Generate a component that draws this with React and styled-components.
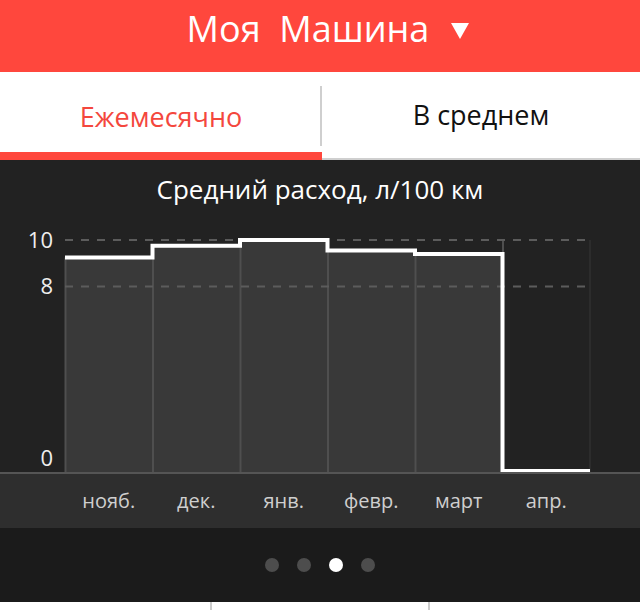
import React from "react";
import styled, { createGlobalStyle } from "styled-components";

const GlobalStyle = createGlobalStyle`
  html, body {
    margin: 0;
    padding: 0;
    background: #1b1b1b;
    font-family: "Open Sans", "Noto Sans", sans-serif;
  }
`;

const months = [
  { label: "нояб.", value: 9.25 },
  { label: "дек.", value: 9.75 },
  { label: "янв.", value: 10 },
  { label: "февр.", value: 9.55 },
  { label: "март", value: 9.4 },
  { label: "апр.", value: 0 },
];

// chart geometry (svg local coords)
const W = 640;
const H = 254;
const LEFT = 65;
const COL = 87.5;
const ZERO = 252;
const UNIT = 23.2;
const yOf = (v) => ZERO - v * UNIT;

const App = () => {
  const [active] = React.useState(0);
  return (
    <Page>
      <GlobalStyle />
      <Header>
        <HeaderTitle>Моя&nbsp; Машина</HeaderTitle>
        <Caret />
      </Header>
      <Tabs>
        <Tab $active={active === 0} $divider>
          Ежемесячно
        </Tab>
        <Tab $active={active === 1}>В среднем</Tab>
      </Tabs>
      <ChartPanel>
        <ChartTitle>Средний расход, л/100 км</ChartTitle>
        <Chart />
        <AxisBand>
          {months.map((m) => (
            <AxisLabel key={m.label}>{m.label}</AxisLabel>
          ))}
        </AxisBand>
      </ChartPanel>
      <Pager>
        {[0, 1, 2, 3].map((i) => (
          <Dot key={i} $on={i === 2} />
        ))}
      </Pager>
      <BottomStrip>
        <StripCell />
        <StripCell $mid />
        <StripCell />
      </BottomStrip>
    </Page>
  );
};

export default App;

const Chart = () => {
  let d = "";
  months.forEach((m, i) => {
    const x0 = LEFT + i * COL;
    const x1 = x0 + COL;
    const y = m.value === 0 ? ZERO - 1 : yOf(m.value);
    d += i === 0 ? `M${x0} ${y}` : ` L${x0} ${y}`;
    d += ` L${x1} ${y}`;
  });
  const right = LEFT + months.length * COL;
  return (
    <ChartSvg width={W} height={H} viewBox={`0 0 ${W} ${H}`}>
      {months.map((m, i) =>
        m.value > 0 ? (
          <rect
            key={m.label}
            x={LEFT + i * COL}
            y={yOf(m.value)}
            width={COL}
            height={ZERO - yOf(m.value)}
            fill="#393939"
          />
        ) : null
      )}
      {months.map((m, i) => (
        <line
          key={"v" + i}
          x1={LEFT + i * COL + 0.5}
          x2={LEFT + i * COL + 0.5}
          y1={m.value > 0 ? yOf(m.value) : yOf(10)}
          y2={ZERO}
          stroke={m.value > 0 || (i > 0 && months[i - 1].value > 0) ? "#4f4f4f" : "#2c2c2c"}
          strokeWidth="2"
        />
      ))}
      <line x1={right} x2={right} y1={yOf(10)} y2={ZERO} stroke="#2c2c2c" strokeWidth="2" />
      {[10, 8].map((v) => (
        <line
          key={"g" + v}
          x1={LEFT}
          x2={right - 5}
          y1={yOf(v)}
          y2={yOf(v)}
          stroke="#5c5c5c"
          strokeWidth="2"
          strokeDasharray="8 8"
        />
      ))}
      <path d={d} fill="none" stroke="#ffffff" strokeWidth="4" strokeLinejoin="miter" />
      <line x1="0" x2={W} y1={ZERO + 1} y2={ZERO + 1} stroke="#555" strokeWidth="2" />
      {[10, 8, 0].map((v) => (
        <text
          key={"t" + v}
          x="53"
          y={v === 0 ? ZERO - 6 : yOf(v) + 8}
          textAnchor="end"
          fill="#eeeeee"
          fontSize="22"
          fontFamily="'Open Sans', 'Noto Sans', sans-serif"
        >
          {v}
        </text>
      ))}
    </ChartSvg>
  );
};

const Page = styled.div`
  width: 640px;
  height: 610px;
  overflow: hidden;
  display: flex;
  flex-direction: column;
`;

const Header = styled.div`
  height: 72px;
  background: #ff473d;
  display: flex;
  align-items: center;
  justify-content: center;
  padding-bottom: 14px;
  padding-left: 16px;
  box-sizing: border-box;
  color: #fff;
`;

const HeaderTitle = styled.span`
  font-size: 36px;
  line-height: 1;
`;

const Caret = styled.span`
  width: 0;
  height: 0;
  margin-left: 22px;
  margin-top: 4px;
  border-left: 9px solid transparent;
  border-right: 9px solid transparent;
  border-top: 16px solid #fff;
`;

const Tabs = styled.div`
  height: 88px;
  background: #fff;
  display: grid;
  grid-template-columns: 322px 1fr;
`;

const Tab = styled.div`
  position: relative;
  display: flex;
  align-items: center;
  justify-content: center;
  font-size: 27px;
  padding-top: ${(p) => (p.$active ? "8px" : "4px")};
  color: ${(p) => (p.$active ? "#f4473d" : "#111")};
  border-bottom: ${(p) => (p.$active ? "8px solid #ff473d" : "2px solid #cfcfcf")};
  box-sizing: border-box;
  padding-bottom: ${(p) => (p.$active ? "0" : "6px")};

  &::after {
    content: "";
    display: ${(p) => (p.$divider ? "block" : "none")};
    position: absolute;
    right: 0;
    top: 14px;
    width: 2px;
    height: 60px;
    background: #cfcfcf;
  }
`;

const ChartPanel = styled.div`
  background: #222;
  display: flex;
  flex-direction: column;
`;

const ChartTitle = styled.div`
  height: 60px;
  display: flex;
  align-items: center;
  justify-content: center;
  padding-bottom: 2px;
  box-sizing: border-box;
  color: #fff;
  font-size: 26px;
`;

const ChartSvg = styled.svg`
  display: block;
`;

const AxisBand = styled.div`
  height: 54px;
  background: #2e2e2e;
  display: grid;
  grid-template-columns: repeat(6, 87.5px);
  padding-left: 65px;
  align-items: center;
`;

const AxisLabel = styled.div`
  text-align: center;
  color: #cfcfcf;
  font-size: 20px;
  padding-bottom: 2px;
`;

const Pager = styled.div`
  height: 74px;
  background: #1b1b1b;
  display: flex;
  align-items: center;
  justify-content: center;
  gap: 18px;
`;

const Dot = styled.span`
  width: 14px;
  height: 14px;
  border-radius: 50%;
  background: ${(p) => (p.$on ? "#fff" : "#4d4d4d")};
`;

const BottomStrip = styled.div`
  flex: 1;
  background: #fff;
  display: grid;
  grid-template-columns: 210px 220px 1fr;
`;

const StripCell = styled.div`
  border-left: ${(p) => (p.$mid ? "2px solid #ccc" : "none")};
  border-right: ${(p) => (p.$mid ? "2px solid #ccc" : "none")};
`;
